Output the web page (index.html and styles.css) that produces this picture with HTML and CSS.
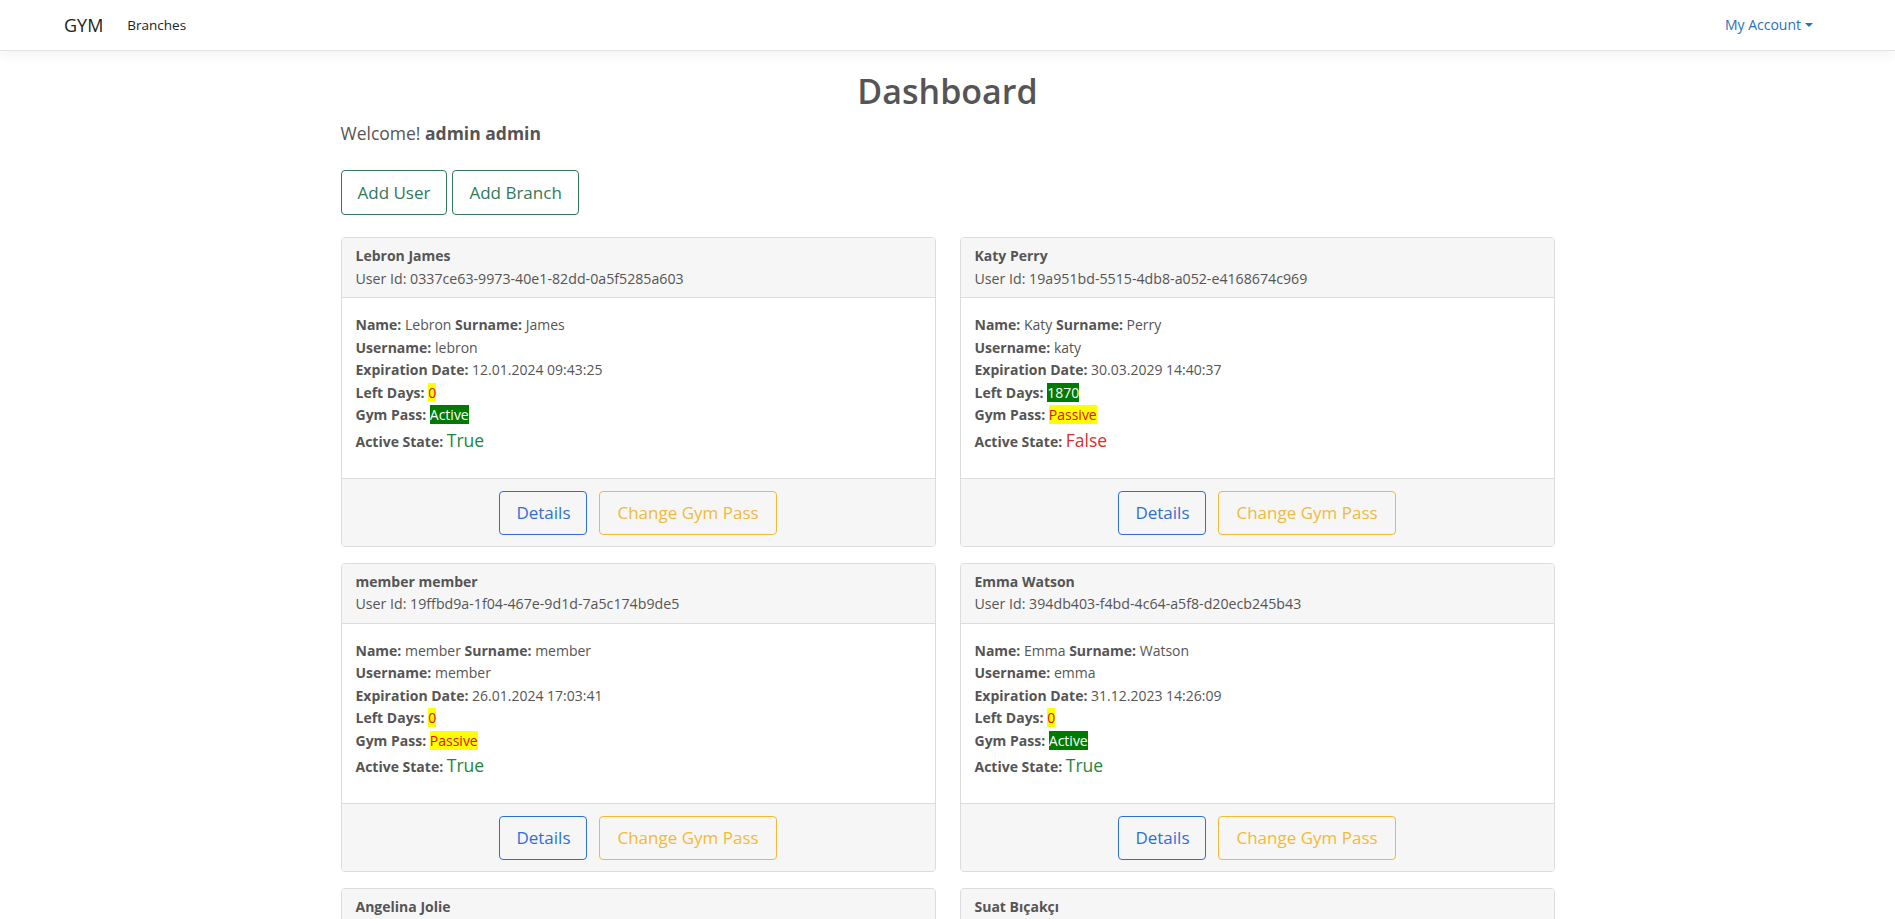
FILE: index.html
```html
<!DOCTYPE html>
<html lang="en">
<head>
<meta charset="utf-8">
<title>Dashboard - GYM</title>
<link rel="stylesheet" href="styles.css">
</head>
<body>
<header class="navbar">
  <div class="nav-left">
    <a class="brand" href="#">GYM</a>
    <a class="nav-link" href="#">Branches</a>
  </div>
  <a class="account" href="#">My Account<span class="caret"></span></a>
</header>
<main class="container">
  <h1 class="title">Dashboard</h1>
  <p class="welcome">Welcome! <b>admin admin</b></p>
  <div class="actions">
    <a class="btn btn-green" href="#">Add User</a>
    <a class="btn btn-green" href="#">Add Branch</a>
  </div>
  <div class="grid">
    <div class="card">
      <div class="card-header"><b>Lebron James</b><div class="uid">User Id: 0337ce63-9973-40e1-82dd-0a5f5285a603</div></div>
      <div class="card-body">
        <div><b>Name:</b> Lebron <b>Surname:</b> James</div>
        <div><b>Username:</b> lebron</div>
        <div><b>Expiration Date:</b> 12.01.2024 09:43:25</div>
        <div><b>Left Days:</b> <span class="hl-yellow">0</span></div>
        <div><b>Gym Pass:</b> <span class="hl-green">Active</span></div>
        <div class="state"><b>Active State:</b> <span class="true">True</span></div>
      </div>
      <div class="card-footer">
        <a class="btn btn-blue" href="#">Details</a>
        <a class="btn btn-yellow" href="#">Change Gym Pass</a>
      </div>
    </div>
    <div class="card">
      <div class="card-header"><b>Katy Perry</b><div class="uid">User Id: 19a951bd-5515-4db8-a052-e4168674c969</div></div>
      <div class="card-body">
        <div><b>Name:</b> Katy <b>Surname:</b> Perry</div>
        <div><b>Username:</b> katy</div>
        <div><b>Expiration Date:</b> 30.03.2029 14:40:37</div>
        <div><b>Left Days:</b> <span class="hl-green">1870</span></div>
        <div><b>Gym Pass:</b> <span class="hl-yellow">Passive</span></div>
        <div class="state"><b>Active State:</b> <span class="false">False</span></div>
      </div>
      <div class="card-footer">
        <a class="btn btn-blue" href="#">Details</a>
        <a class="btn btn-yellow" href="#">Change Gym Pass</a>
      </div>
    </div>
    <div class="card">
      <div class="card-header"><b>member member</b><div class="uid">User Id: 19ffbd9a-1f04-467e-9d1d-7a5c174b9de5</div></div>
      <div class="card-body">
        <div><b>Name:</b> member <b>Surname:</b> member</div>
        <div><b>Username:</b> member</div>
        <div><b>Expiration Date:</b> 26.01.2024 17:03:41</div>
        <div><b>Left Days:</b> <span class="hl-yellow">0</span></div>
        <div><b>Gym Pass:</b> <span class="hl-yellow">Passive</span></div>
        <div class="state"><b>Active State:</b> <span class="true">True</span></div>
      </div>
      <div class="card-footer">
        <a class="btn btn-blue" href="#">Details</a>
        <a class="btn btn-yellow" href="#">Change Gym Pass</a>
      </div>
    </div>
    <div class="card">
      <div class="card-header"><b>Emma Watson</b><div class="uid">User Id: 394db403-f4bd-4c64-a5f8-d20ecb245b43</div></div>
      <div class="card-body">
        <div><b>Name:</b> Emma <b>Surname:</b> Watson</div>
        <div><b>Username:</b> emma</div>
        <div><b>Expiration Date:</b> 31.12.2023 14:26:09</div>
        <div><b>Left Days:</b> <span class="hl-yellow">0</span></div>
        <div><b>Gym Pass:</b> <span class="hl-green">Active</span></div>
        <div class="state"><b>Active State:</b> <span class="true">True</span></div>
      </div>
      <div class="card-footer">
        <a class="btn btn-blue" href="#">Details</a>
        <a class="btn btn-yellow" href="#">Change Gym Pass</a>
      </div>
    </div>
    <div class="card">
      <div class="card-header"><b>Angelina Jolie</b><div class="uid">User Id</div></div>
      <div class="card-body"></div>
    </div>
    <div class="card">
      <div class="card-header"><b>Suat Bıçakçı</b><div class="uid">User Id</div></div>
      <div class="card-body"></div>
    </div>
  </div>
</main>
</body>
</html>
```
FILE: styles.css
```css
html, body {
  margin: 0;
  padding: 0;
}
body {
  font-family: "Open Sans", "Noto Sans", sans-serif;
  color: #555;
  font-size: 14px;
  line-height: 22.5px;
  background: #fff;
}
a {
  text-decoration: none;
}
b {
  font-weight: 700;
}

/* navbar */
.navbar {
  height: 50px;
  border-bottom: 1px solid #e3e3e3;
  box-shadow: 0 4px 12px rgba(0, 0, 0, 0.05);
  display: flex;
  align-items: center;
  justify-content: space-between;
  padding: 0 82px 0 64px;
}
.nav-left {
  display: flex;
  align-items: center;
  gap: 24px;
}
.brand {
  color: #222;
  font-size: 18px;
  line-height: 27px;
}
.nav-link {
  color: #222;
  font-size: 13.5px;
}
.account {
  color: #2a6fbd;
  font-size: 14px;
  display: flex;
  align-items: center;
}
.caret {
  display: inline-block;
  margin-left: 4px;
  border-top: 4px solid #2a6fbd;
  border-left: 4px solid transparent;
  border-right: 4px solid transparent;
}

/* main */
.container {
  width: 1214px;
  margin: 0 auto;
}
.title {
  margin: 19px 0 7px;
  text-align: center;
  font-size: 34px;
  line-height: 43px;
  font-weight: 600;
  color: #555;
}
.welcome {
  margin: 0;
  font-size: 17.5px;
  line-height: 27px;
}
.actions {
  margin-top: 23px;
  display: flex;
  gap: 5px;
}
.btn {
  display: inline-block;
  font-size: 17px;
  line-height: 27px;
  padding: 8px 16px;
  border: 1px solid;
  border-radius: 4px;
  background: transparent;
}
.btn-green {
  color: #2f7a58;
  border-color: #2f7a58;
}
.btn-blue {
  color: #2f6fd3;
  border-color: #2f6fd3;
  line-height: 26px;
}
.btn-yellow {
  color: #f2ba38;
  border-color: #f2ba38;
  line-height: 26px;
  padding: 8px 17px;
}

/* cards */
.grid {
  margin-top: 22px;
  display: grid;
  grid-template-columns: 1fr 1fr;
  column-gap: 24px;
  row-gap: 16px;
}
.card {
  border: 1px solid #dcdcdc;
  border-radius: 4px;
  overflow: hidden;
  background: #fff;
}
.card-header {
  background: #f6f6f6;
  border-bottom: 1px solid #dcdcdc;
  padding: 7px 14px;
}
.uid {
  font-size: 14.2px;
}
.card-body {
  padding: 16px 14px 23px;
}
.state {
  line-height: 27px;
}
.true {
  color: #22863a;
  font-size: 17.5px;
}
.false {
  color: #d9302c;
  font-size: 17.5px;
}
.hl-yellow {
  background: #ffff00;
  color: #e01010;
}
.hl-green {
  background: #007a00;
  color: #fff;
}
.card-footer {
  background: #f6f6f6;
  border-top: 1px solid #dcdcdc;
  padding: 12px 12px 11px;
  display: flex;
  justify-content: center;
  gap: 12px;
}
```
